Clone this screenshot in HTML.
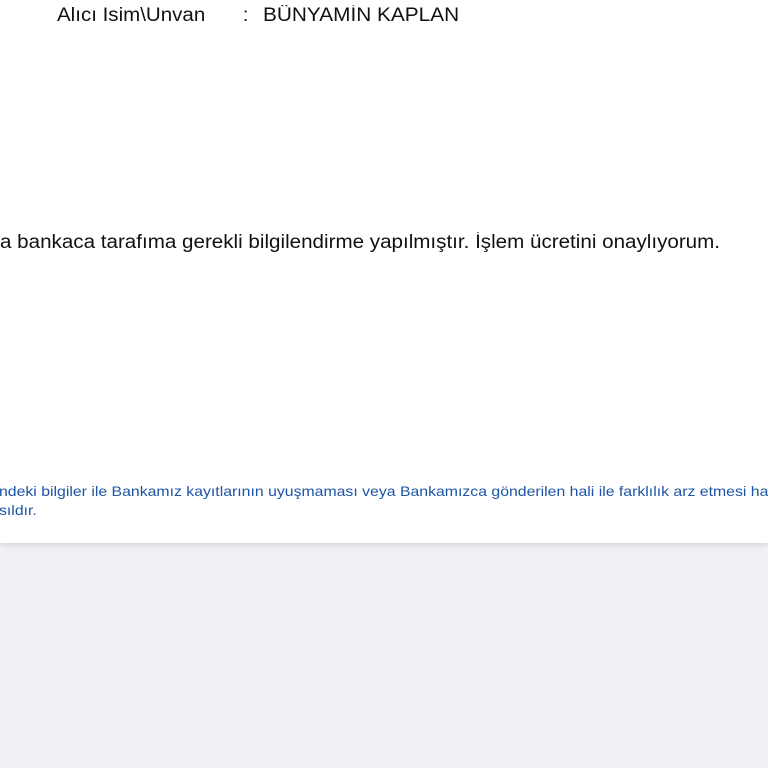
<!DOCTYPE html>
<html><head><meta charset="utf-8"><style>
body{margin:0;width:768px;height:768px;background:#f1f0f5;overflow:hidden;font-family:"Liberation Sans",Arial,sans-serif;position:relative}
.card{position:absolute;left:0;top:0;width:768px;height:543px;background:#fff;box-shadow:0 2px 6px rgba(0,0,0,0.12)}
.t{position:absolute;white-space:nowrap;color:#111;transform-origin:0 0}
</style></head><body>
<div class="card"></div>
<div class="t" style="left:57px;top:5px;font-size:19px;transform:scaleX(1.08)">Alıcı Isim\Unvan</div>
<div class="t" style="left:243px;top:5px;font-size:19px">:</div>
<div class="t" style="left:263px;top:5px;font-size:19px;transform:scaleX(1.095)">BÜNYAMİN KAPLAN</div>
<div class="t" style="left:0;top:232px;font-size:19px;transform:scaleX(1.084)">a bankaca tarafıma gerekli bilgilendirme yapılmıştır. İşlem ücretini onaylıyorum.</div>
<div class="t" style="left:-1px;top:483px;font-size:14px;color:#1d55a6;transform:scaleX(1.13)">ndeki bilgiler ile Bankamız kayıtlarının uyuşmaması veya Bankamızca gönderilen hali ile farklılık arz etmesi ha</div>
<div class="t" style="left:-1px;top:502px;font-size:14px;color:#1d55a6;transform:scaleX(1.13)">sıldır.</div>
</body></html>
